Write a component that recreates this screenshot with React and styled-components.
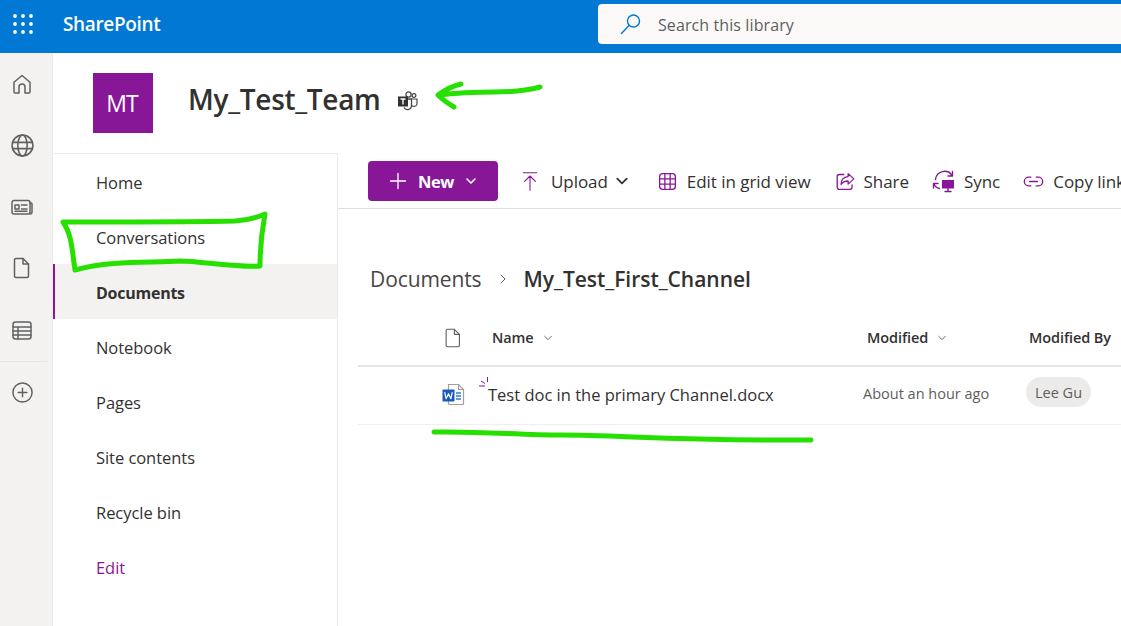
import React from "react";
import styled, { createGlobalStyle } from "styled-components";

const GlobalStyle = createGlobalStyle`
  html, body {
    margin: 0;
    padding: 0;
    height: 100%;
    overflow: hidden;
    background: #fff;
  }
  body {
    font-family: "Open Sans", "Noto Sans", "Liberation Sans", sans-serif;
    color: #323130;
  }
`;

const Page = styled.div`
  position: relative;
  width: 1121px;
  height: 626px;
  overflow: hidden;
  display: flex;
  flex-direction: column;
`;

const SuiteBar = styled.header`
  flex: none;
  height: 53px;
  box-sizing: border-box;
  padding-bottom: 6px;
  background: #0078d4;
  display: flex;
  align-items: center;
  color: #fff;
`;
const Waffle = styled.div`
  width: 63px;
  padding-left: 13px;
  box-sizing: border-box;
  display: flex;
`;
const Brand = styled.div`
  font-size: 19px;
  font-weight: 600;
  letter-spacing: -0.35px;
  width: 535px;
`;
const SearchBox = styled.div`
  flex: 1;
  height: 40px;
  background: #faf9f8;
  border-radius: 4px 0 0 4px;
  display: flex;
  align-items: center;
  padding-left: 22px;
  gap: 16px;
  color: #605e5c;
  font-size: 16px;
  letter-spacing: 0.1px;
`;
const SearchText = styled.span`
  padding-top: 3px;
`;

const Body = styled.div`
  flex: 1;
  display: flex;
  min-height: 0;
`;
const Rail = styled.nav`
  flex: none;
  width: 53px;
  background: #f3f2f1;
  display: flex;
  flex-direction: column;
  border-right: 1px solid #eaeaea;
  box-sizing: border-box;
`;
const RailButton = styled.div`
  height: 61.5px;
  display: flex;
  align-items: center;
  justify-content: center;
  padding-right: 8px;
  color: #616161;
`;
const RailDivider = styled.div`
  height: 1px;
  width: 47px;
  background: #e8e6e4;
`;
const RailPlus = styled(RailButton)`
  height: 62px;
`;

const Site = styled.div`
  flex: 1;
  min-width: 0;
  display: flex;
  flex-direction: column;
`;
const SiteHeader = styled.div`
  flex: none;
  height: 100px;
  box-sizing: border-box;
  padding: 20px 0 0 40px;
  display: flex;
  align-items: flex-start;
`;
const SiteLogo = styled.div`
  width: 60px;
  height: 60px;
  background: #881798;
  color: #fff;
  font-size: 23px;
  display: flex;
  align-items: center;
  justify-content: center;
  letter-spacing: -0.9px;
  padding-right: 2px;
  box-sizing: border-box;
`;
const SiteTitle = styled.h1`
  margin: 7px 0 0 35px;
  font-size: 28px;
  font-weight: 600;
  line-height: 38px;
  letter-spacing: -0.3px;
  color: #323130;
`;
const TeamsMark = styled.div`
  margin: 17px 0 0 16px;
  display: flex;
`;
const Columns = styled.div`
  flex: 1;
  display: flex;
  min-height: 0;
`;
const SideNav = styled.nav`
  flex: none;
  width: 285px;
  box-sizing: border-box;
  border-top: 1px solid #eaeaea;
  border-right: 1px solid #eaeaea;
`;
const NavItem = styled.div`
  height: 55px;
  box-sizing: border-box;
  display: flex;
  align-items: center;
  padding-top: ${(p) => (p.$active ? "2px" : "1px")};
  padding-left: ${(p) => (p.$active ? "41px" : "43px")};
  font-size: ${(p) => (p.$active ? "16px" : "16.5px")};
  font-weight: ${(p) => (p.$active ? 700 : 400)};
  letter-spacing: ${(p) => (p.$active ? "-0.25px" : "-0.05px")};
  color: ${(p) => (p.$link ? "#881798" : "#323130")};
  background: ${(p) => (p.$active ? "#f3f2f1" : "transparent")};
  border-left: ${(p) => (p.$active ? "2px solid #881798" : "none")};
`;

const Main = styled.main`
  flex: 1;
  min-width: 0;
  display: flex;
  flex-direction: column;
`;
const CommandBar = styled.div`
  flex: none;
  height: 56px;
  box-sizing: border-box;
  border-bottom: 1px solid #e1dfdd;
  padding: 8px 0 0 30px;
  display: flex;
  align-items: flex-start;
  white-space: nowrap;
`;
const NewButton = styled.div`
  width: 130px;
  height: 40px;
  flex: none;
  background: #881798;
  border-radius: 4px;
  color: #fff;
  font-size: 16.5px;
  font-weight: 700;
  letter-spacing: -0.4px;
  display: flex;
  align-items: center;
  box-sizing: border-box;
  padding-left: 21px;
  gap: 11px;
`;
const Command = styled.div`
  flex: none;
  height: 40px;
  margin-left: ${(p) => p.$gap}px;
  display: flex;
  align-items: center;
  gap: ${(p) => p.$iconGap || 9}px;
  font-size: 17px;
  letter-spacing: -0.05px;
  color: #323130;
`;
const CommandCaret = styled.span`
  display: flex;
  margin-left: -4px;
`;
const Breadcrumb = styled.div`
  margin: 53px 0 0 32px;
  height: 34px;
  display: flex;
  align-items: center;
  font-size: 21px;
  letter-spacing: -0.1px;
  color: #484644;
`;
const Crumb = styled.span`
  font-weight: 600;
  color: #323130;
  letter-spacing: -0.03px;
`;
const CrumbSep = styled.span`
  margin: 0 15px;
  display: flex;
`;
const HeaderRow = styled.div`
  margin: 14px 0 0 20px;
  height: 55px;
  border-bottom: 2px solid #e8e6e4;
  display: flex;
  align-items: center;
  font-size: 14.5px;
  font-weight: 600;
  letter-spacing: -0.1px;
  white-space: nowrap;
`;
const FileRow = styled.div`
  margin-left: 20px;
  height: 58px;
  box-sizing: border-box;
  padding-bottom: 3px;
  border-bottom: 1px solid #f0efee;
  display: flex;
  align-items: center;
  white-space: nowrap;
`;
const IconCell = styled.div`
  width: ${(p) => p.$w}px;
  flex: none;
  padding-left: ${(p) => p.$pad}px;
  box-sizing: border-box;
  display: flex;
`;
const HeadCell = styled.div`
  width: ${(p) => p.$w}px;
  flex: none;
  display: flex;
  align-items: center;
  gap: 9px;
`;
const NameCell = styled.div`
  position: relative;
  width: 375px;
  flex: none;
  font-size: 16.5px;
  color: #323130;
`;
const NewSpark = styled.span`
  position: absolute;
  left: -10px;
  top: -7px;
  display: flex;
`;
const DateCell = styled.div`
  width: 163px;
  flex: none;
  margin-bottom: 2px;
  font-size: 14.5px;
  color: #605e5c;
`;
const PersonChip = styled.div`
  height: 30px;
  width: 65px;
  margin-bottom: 4px;
  border-radius: 15px;
  background: #edebe9;
  display: flex;
  align-items: center;
  justify-content: center;
  font-size: 14.5px;
  color: #605e5c;
`;
const Ink = styled.svg`
  position: absolute;
  left: 0;
  top: 0;
  pointer-events: none;
`;

const Icon = ({ size = 24, children, stroke = "#616161", width = 1.5 }) => (
  <svg width={size} height={size} viewBox="0 0 24 24" fill="none" stroke={stroke} strokeWidth={width} strokeLinecap="round" strokeLinejoin="round">
    {children}
  </svg>
);

const Chevron = ({ color = "#323130", size = 12, width = 1.3, right }) => (
  <svg width={size} height={size} viewBox="0 0 12 12" fill="none" stroke={color} strokeWidth={width} strokeLinecap="round" strokeLinejoin="round">
    <path d={right ? "M4 2l4 4-4 4" : "M2 4l4 4 4-4"} />
  </svg>
);

const WaffleIcon = () => (
  <svg width="20" height="20" viewBox="0 0 20 20" fill="#fff">
    {[2, 10, 18].flatMap((y) =>
      [2, 10, 18].map((x) => <circle key={`${x}-${y}`} cx={x} cy={y} r="1.9" />)
    )}
  </svg>
);

const TeamsIcon = () => (
  <svg width="22" height="22" viewBox="0 0 22 22" fill="none">
    <circle cx="11.5" cy="4.5" r="2.6" stroke="#444" strokeWidth="1.2" />
    <circle cx="17" cy="5.5" r="1.9" stroke="#444" strokeWidth="1.2" />
    <path d="M7 9h7.5v7a4 4 0 0 1-7.5 1.5" stroke="#444" strokeWidth="1.3" />
    <path d="M15 9h5v5a3 3 0 0 1-5 1.6" stroke="#444" strokeWidth="1.2" />
    <rect x="1" y="6.5" width="10" height="10" fill="#323130" />
    <path d="M3.5 9h5M6 9v5.5" stroke="#fff" strokeWidth="1.4" />
  </svg>
);

const WordIcon = () => (
  <svg width="24" height="24" viewBox="0 0 24 24" fill="none">
    <path d="M6.5 2.5h10l5 5v14a1 1 0 0 1-1 1h-13a1 1 0 0 1-1-1z" fill="#fff" stroke="#a19f9d" strokeWidth="1.2" />
    <path d="M16.5 2.5v5h5" stroke="#a19f9d" strokeWidth="1.2" />
    <path d="M14 11h5M14 14h5M14 17h5" stroke="#2b7cd3" strokeWidth="1.3" />
    <rect x="0.5" y="7.5" width="12" height="12" rx="0.8" fill="#185abd" />
    <path d="M2.7 10.2l1.4 6.5 2.4-5 2.4 5 1.4-6.5" stroke="#fff" strokeWidth="1.2" strokeLinejoin="round" />
  </svg>
);

const navLinks = ["Home", "Conversations", "Documents", "Notebook", "Pages", "Site contents", "Recycle bin", "Edit"];

export default function App() {
  return (
    <Page>
      <GlobalStyle />
      <SuiteBar>
        <Waffle><WaffleIcon /></Waffle>
        <Brand>SharePoint</Brand>
        <SearchBox>
          <svg width="22" height="22" viewBox="0 0 22 22" fill="none" stroke="#0078d4" strokeWidth="1.4" strokeLinecap="round">
            <circle cx="13.5" cy="8" r="6" />
            <path d="M9 12.5L1.5 20.5" />
          </svg>
          <SearchText>Search this library</SearchText>
        </SearchBox>
      </SuiteBar>
      <Body>
        <Rail>
          <RailButton>
            <Icon>
              <path d="M4 20V10.2L12 3.5l8 6.7V20a1 1 0 0 1-1 1h-4v-6a3 3 0 0 0-6 0v6H5a1 1 0 0 1-1-1z" />
            </Icon>
          </RailButton>
          <RailButton>
            <Icon size={25}>
              <circle cx="12" cy="12" r="10" />
              <ellipse cx="12" cy="12" rx="4.5" ry="10" />
              <path d="M2.6 9h18.8M2.6 15h18.8" />
            </Icon>
          </RailButton>
          <RailButton>
            <Icon>
              <path d="M2 7.5a2 2 0 0 1 2-2h14a2 2 0 0 1 2 2V17a2 2 0 0 1-2 2H4a2 2 0 0 1-2-2z" />
              <path d="M20 8h1.2a1 1 0 0 1 .8 1v8a2 2 0 0 1-2 2" />
              <rect x="5" y="10" width="4" height="4" />
              <path d="M11.5 10H17M11.5 14H17M5 16.3h12" />
            </Icon>
          </RailButton>
          <RailButton>
            <Icon>
              <path d="M6 2.5h7l5.5 5.5v12a1.5 1.5 0 0 1-1.5 1.5H6A1.5 1.5 0 0 1 4.5 20V4A1.5 1.5 0 0 1 6 2.5z" />
              <path d="M13 2.5V8h5.5" />
            </Icon>
          </RailButton>
          <RailButton>
            <Icon>
              <rect x="3" y="4" width="18" height="17" rx="2.5" />
              <path d="M3 9h18M3 13h18M3 17h18M8 9v12" />
            </Icon>
          </RailButton>
          <RailDivider />
          <RailPlus>
            <Icon size={23}>
              <circle cx="12" cy="12" r="10" />
              <path d="M12 7.5v9M7.5 12h9" />
            </Icon>
          </RailPlus>
        </Rail>
        <Site>
          <SiteHeader>
            <SiteLogo>MT</SiteLogo>
            <SiteTitle>My_Test_Team</SiteTitle>
            <TeamsMark><TeamsIcon /></TeamsMark>
          </SiteHeader>
          <Columns>
            <SideNav>
              {navLinks.map((label) => (
                <NavItem key={label} $active={label === "Documents"} $link={label === "Edit"}>
                  {label}
                </NavItem>
              ))}
            </SideNav>
            <Main>
              <CommandBar>
                <NewButton>
                  <svg width="18" height="18" viewBox="0 0 18 18" stroke="#fff" strokeWidth="1.3" strokeLinecap="round">
                    <path d="M9 1.5v15M1.5 9h15" />
                  </svg>
                  New
                  <Chevron color="#fff" width={1.6} />
                </NewButton>
                <Command $gap={22} $iconGap={11}>
                  <Icon size={20} stroke="#881798" width={1.3}>
                    <path d="M4 2h16M12 23V6M5.5 12.5L12 6l6.5 6.5" />
                  </Icon>
                  Upload
                  <CommandCaret><Chevron size={14} width={1.5} /></CommandCaret>
                </Command>
                <Command $gap={28} $iconGap={9}>
                  <Icon size={21} stroke="#881798" width={1.5}>
                    <rect x="3" y="3" width="18" height="18" rx="3.5" />
                    <path d="M3 9h18M3 15h18M9 3v18M15 3v18" />
                  </Icon>
                  Edit in grid view
                </Command>
                <Command $gap={24} $iconGap={8}>
                  <Icon size={21} stroke="#881798" width={1.5}>
                    <path d="M10 4H5a2.5 2.5 0 0 0-2.5 2.5v12A2.5 2.5 0 0 0 5 21h12a2.5 2.5 0 0 0 2.5-2.5V16" />
                    <path d="M15 3l6.5 6-6.5 6v-3.6c-3.5 0-6 1-8 4 0-5 2.5-8.5 8-9z" />
                  </Icon>
                  Share
                </Command>
                <Command $gap={23} $iconGap={8}>
                  <svg width="24" height="24" viewBox="0 0 24 24" fill="none" stroke="#881798" strokeWidth="1.4" strokeLinecap="round" strokeLinejoin="round">
                    <path d="M3.5 10.5A9 9 0 0 1 20 6.5M20.5 2.5V7H16" />
                    <path d="M1.5 14.5H6M1.5 14.5V19M1.5 14.5c1.5 3 3 4.5 6 5" />
                    <rect x="10" y="11" width="12" height="8.5" fill="#881798" stroke="none" />
                    <path d="M16 19.5V22M13 22.5h6" />
                  </svg>
                  Sync
                </Command>
                <Command $gap={23} $iconGap={9}>
                  <Icon size={21} stroke="#881798" width={1.5}>
                    <path d="M9 7H6.5a5 5 0 0 0 0 10H9M15 7h2.5a5 5 0 0 1 0 10H15M7.5 12h9" />
                  </Icon>
                  Copy link
                </Command>
              </CommandBar>
              <Breadcrumb>
                Documents
                <CrumbSep>
                  <Chevron color="#605e5c" width={1} right />
                </CrumbSep>
                <Crumb>My_Test_First_Channel</Crumb>
              </Breadcrumb>
              <HeaderRow>
                <IconCell $w={134} $pad={84}>
                  <Icon size={22} stroke="#605e5c" width={1.2}>
                    <path d="M6 2.5h7.5L19 8v12a1.5 1.5 0 0 1-1.5 1.5H6A1.5 1.5 0 0 1 4.5 20V4A1.5 1.5 0 0 1 6 2.5z" />
                    <path d="M13.5 2.5V8H19" />
                  </Icon>
                </IconCell>
                <HeadCell $w={375}>Name <Chevron color="#605e5c" size={10} width={1.1} /></HeadCell>
                <HeadCell $w={162}>Modified <Chevron color="#605e5c" size={10} width={1.1} /></HeadCell>
                <HeadCell $w={100}>Modified By</HeadCell>
              </HeaderRow>
              <FileRow>
                <IconCell $w={130} $pad={84}><WordIcon /></IconCell>
                <NameCell>
                  <NewSpark>
                    <svg width="12" height="12" viewBox="0 0 12 12" stroke="#881798" strokeWidth="1" fill="none">
                      <path d="M1 10h6M3 5l4 2.5M9.5 1v5" />
                    </svg>
                  </NewSpark>
                  Test doc in the primary Channel.docx
                </NameCell>
                <DateCell>About an hour ago</DateCell>
                <PersonChip>Lee Gu</PersonChip>
              </FileRow>
            </Main>
          </Columns>
        </Site>
      </Body>
      <Ink width="1121" height="626" viewBox="0 0 1121 626" fill="none" stroke="#26e000" strokeWidth="5" strokeLinecap="round" strokeLinejoin="round">
        <path d="M540 87C525 91 515 92 495 92C470 92 455 93 438 95M461 84C452 86 445 90 438 95C443 100 449 104 454 107" />
        <path d="M63 222C120 222 200 222 235 221C250 220 258 217 265 214C263 225 260 240 260 266C240 268 200 261 180 261C150 263 110 260 75 270C72 250 72 235 63 222Z" />
        <path d="M434 432C480 431 520 435 560 435C620 435 680 441 811 440" />
      </Ink>
    </Page>
  );
}
